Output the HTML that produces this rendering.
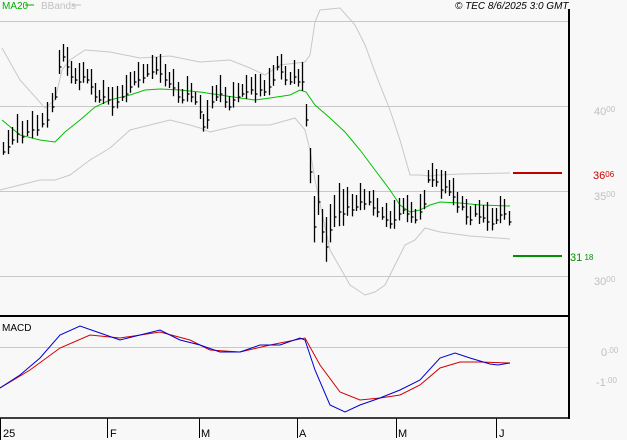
<!DOCTYPE html>
<html><head><meta charset="utf-8"><style>
html,body{margin:0;padding:0;background:#f8f8f8;}
svg{display:block;font-family:"Liberation Sans",sans-serif;}
</style></head><body>
<svg id="s" width="627" height="440" viewBox="0 0 627 440" xmlns="http://www.w3.org/2000/svg">
<rect width="627" height="440" fill="#f8f8f8"/>
<g stroke="#c8c8c8" stroke-width="1">
<line x1="0" y1="21.5" x2="569" y2="21.5"/><line x1="0" y1="106.5" x2="569" y2="106.5"/>
<line x1="0" y1="191.5" x2="569" y2="191.5"/><line x1="0" y1="276.5" x2="569" y2="276.5"/>
<line x1="0" y1="347.5" x2="569" y2="347.5"/>
</g>
<g fill="none" stroke="#c8c8c8" stroke-width="1">
<polyline points="2,48 20,80 45,108 55,100 62,70 70,60 85,50 110,52 140,58 170,56 200,62 230,60 250,68 265,75 280,65 305,62 310,55 315,22 320,10 340,8 355,25 365,45 378,80 390,110 400,140 410,175 420,175 430,176 440,175 460,174 510,173"/>
<polyline points="0,190 20,185 40,180 55,180 70,175 90,160 110,148 130,130 150,125 170,120 190,125 200,128 210,132 240,125 270,125 295,118 305,130 310,150 315,180 330,250 350,285 365,295 375,292 385,285 395,265 405,245 415,240 425,228 440,232 470,236 510,239"/>
</g>
<polyline fill="none" stroke="#00c000" stroke-width="1" points="2,120 20,135 40,140 55,142 65,132 80,120 95,107 110,100 130,95 145,90 160,89 180,90 200,92 220,95 240,98 255,100 270,98 290,95 300,90 306,92 315,105 330,118 345,132 360,150 375,170 390,190 400,205 410,212 420,210 430,205 440,202 460,203 480,205 510,206"/>
<g id="bars" stroke="#000" stroke-width="1.3"></g>
<line x1="513" y1="173" x2="562" y2="173" stroke="#c00000" stroke-width="2"/>
<line x1="513" y1="256" x2="562" y2="256" stroke="#009000" stroke-width="2"/>
<polyline fill="none" stroke="#d00000" stroke-width="1" points="0,388 30,370 60,348 90,335 120,338 160,332 190,340 210,350 240,352 270,345 305,338 320,365 340,392 360,400 380,398 400,395 420,385 440,368 460,362 480,362 510,363"/>
<polyline fill="none" stroke="#0000d0" stroke-width="1" points="0,388 20,375 40,358 60,335 80,326 100,333 120,340 140,335 160,330 180,340 200,345 220,352 240,352 260,345 280,345 300,338 305,340 315,370 330,405 345,412 360,405 380,398 400,390 420,380 440,358 455,353 470,358 490,364 498,365 510,363"/>
<line x1="0" y1="316" x2="569" y2="316" stroke="#000" stroke-width="2"/>
<line x1="569" y1="9" x2="569" y2="419" stroke="#000" stroke-width="2"/>
<line x1="0" y1="418" x2="570" y2="418" stroke="#000" stroke-width="1.5"/>
<g stroke="#000" stroke-width="1">
<line x1="0.5" y1="418" x2="0.5" y2="440"/><line x1="107.5" y1="418" x2="107.5" y2="438"/><line x1="199.5" y1="418" x2="199.5" y2="438"/><line x1="297.5" y1="418" x2="297.5" y2="438"/><line x1="396.5" y1="418" x2="396.5" y2="438"/><line x1="496.5" y1="418" x2="496.5" y2="438"/>
</g>
<g font-size="11" fill="#000">
<text x="3" y="437">25</text><text x="110" y="437">F</text><text x="201" y="437">M</text><text x="299" y="437">A</text><text x="398" y="437">M</text><text x="499" y="437">J</text>
</g>
<g font-size="11" fill="#c0c0c0">
<text x="594" y="115">40<tspan font-size="8" dy="-3">00</tspan></text>
<text x="594" y="200">35<tspan font-size="8" dy="-3">00</tspan></text>
<text x="594" y="285">30<tspan font-size="8" dy="-3">00</tspan></text>
<text x="601" y="356">0<tspan font-size="8" dy="-3">.00</tspan></text>
<text x="596" y="386">-1<tspan font-size="8" dy="-3">.00</tspan></text>
</g>
<text x="593" y="179" font-size="11" fill="#d00000">36<tspan font-size="8" dy="-2">06</tspan></text>
<text x="570" y="261" font-size="11" fill="#009000">31<tspan font-size="8" dy="-1"> 18</tspan></text>
<text x="2" y="9" font-size="10" fill="#00b000">MA20</text>
<line x1="25" y1="5" x2="34" y2="5" stroke="#00b000" stroke-width="1"/>
<text x="41" y="9" font-size="10" fill="#c0c0c0">BBands</text>
<line x1="72" y1="5" x2="81" y2="5" stroke="#c0c0c0" stroke-width="1"/>
<text x="455" y="9" font-size="10" font-style="italic" fill="#000">© TEC 8/6/2025 3:0 GMT</text>
<text x="2" y="331" font-size="10" fill="#000">MACD</text>
</svg>
<script>
var pts=[[3,150],[8,145],[12,138],[17,132],[22,135],[27,130],[32,128],[37,128],[42,122],[47,118],[52,105],[55,95],[59,65],[63,55],[67,65],[71,75],[75,78],[79,80],[83,75],[87,78],[91,85],[95,95],[99,98],[103,95],[108,98],[112,105],[117,100],[122,95],[126,92],[130,85],[134,80],[138,78],[143,76],[147,72],[152,70],[156,68],[160,72],[165,78],[169,82],[173,86],[178,95],[182,98],[187,92],[191,95],[195,100],[200,110],[203,125],[207,118],[212,100],[216,95],[220,92],[225,100],[229,105],[233,98],[238,95],[242,92],[246,90],[251,88],[255,92],[260,88],[264,90],[269,85],[273,78],[277,65],[281,70],[285,78],[290,80],[294,75],[298,80],[302,80],[306,118],[310,170],[314,225],[318,200],[322,230],[326,245],[330,228],[334,215],[339,210],[343,212],[347,205],[352,208],[356,205],[360,200],[364,202],[369,200],[373,206],[377,210],[382,215],[386,218],[390,222],[394,218],[399,212],[403,208],[407,212],[411,215],[415,218],[420,210],[424,202],[428,178],[432,178],[436,180],[441,188],[445,185],[449,190],[453,195],[457,205],[462,205],[466,215],[470,218],[475,212],[479,215],[483,216],[487,220],[492,222],[496,218],[500,213],[504,212],[509,220]];
var g=document.getElementById('bars'),h='';
pts.forEach(function(p,i){var x=p[0]+0.5,y=p[1],l=8+((i*7)%11);if(i>70&&i<80)l+=12;
h+='<line x1="'+x+'" y1="'+(y-l)+'" x2="'+x+'" y2="'+(y+l*0.6)+'"/><line x1="'+x+'" y1="'+(y+2)+'" x2="'+(x+2)+'" y2="'+(y+2)+'"/>';});
g.innerHTML=h;
</script>
</body></html>
